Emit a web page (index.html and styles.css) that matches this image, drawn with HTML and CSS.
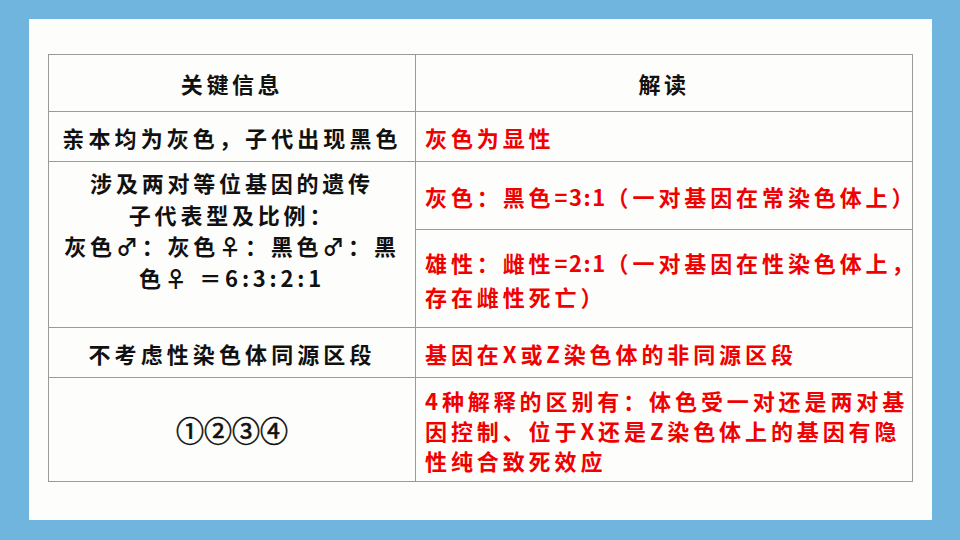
FILE: index.html
```html
<!DOCTYPE html>
<html lang="zh-CN">
<head>
<meta charset="utf-8">
<title>关键信息 解读</title>
<link rel="stylesheet" href="styles.css">
</head>
<body>
<div class="panel">
  <table class="info">
    <colgroup><col class="c-left"><col class="c-right"></colgroup>
    <tr class="r-head">
      <th>关键信息</th>
      <th>解读</th>
    </tr>
    <tr class="r-one">
      <td class="key">亲本均为灰色，子代出现黑色</td>
      <td class="read">灰色为显性</td>
    </tr>
    <tr class="r-twoa">
      <td class="key top" rowspan="2">涉及两对等位基因的遗传<br>子代表型及比例：<br>灰色♂：灰色♀：黑色♂：黑<br>色♀ ＝6:3:2:1</td>
      <td class="read">灰色：黑色<span class="lat">=3:1</span>（一对基因在常染色体上）</td>
    </tr>
    <tr class="r-twob">
      <td class="read tall">雄性：雌性<span class="lat">=2:1</span>（一对基因在性染色体上，<br>存在雌性死亡）</td>
    </tr>
    <tr class="r-three">
      <td class="key">不考虑性染色体同源区段</td>
      <td class="read">基因在X或Z染色体的非同源区段</td>
    </tr>
    <tr class="r-four">
      <td class="key nums">①②③④</td>
      <td class="read">4种解释的区别有：体色受一对还是两对基<br>因控制、位于X还是Z染色体上的基因有隐<br>性纯合致死效应</td>
    </tr>
  </table>
</div>
</body>
</html>
```
FILE: styles.css
```css
html, body {
  margin: 0;
  padding: 0;
}
body {
  width: 960px;
  height: 540px;
  background: #6fb5dd;
  overflow: hidden;
  font-family: "Noto Sans CJK SC", "Noto Sans", sans-serif;
}
.panel {
  box-sizing: border-box;
  margin: 19px 0 0 29px;
  width: 903px;
  height: 501px;
  background: #fdfdfb;
  padding: 35px 0 0 19px;
}
.info {
  border-collapse: collapse;
  width: 864px;
  table-layout: fixed;
  font-size: 22px;
  font-weight: 700;
  letter-spacing: 3.6px;
}
.c-left { width: 367px; }
.c-right { width: 497px; }
.info th, .info td {
  border: 1.5px solid #9a9a9a;
  padding: 0;
  white-space: nowrap;
  overflow: visible;
}
.info th {
  color: #111;
  font-weight: 700;
  text-align: center;
}
.r-head { height: 57px; }
.r-one { height: 50px; }
.r-twoa { height: 68px; }
.r-twob { height: 98px; }
.r-three { height: 50px; }
.r-four { height: 104px; }
.info .key {
  color: #111;
  text-align: center;
  vertical-align: middle;
  letter-spacing: 4.1px;
}
.info .key.top {
  vertical-align: top;
  line-height: 31.5px;
  padding-top: 5px;
  letter-spacing: 3.8px;
}
.info .key.nums {
  font-size: 28px;
  letter-spacing: 0;
  font-weight: 400;
  -webkit-text-stroke: 0.6px #111;
}
.info .read {
  color: #f00000;
  text-align: left;
  padding-left: 9px;
  vertical-align: middle;
  line-height: 30px;
  letter-spacing: 3.9px;
}
.info .read .lat {
  letter-spacing: 1.5px;
}
.info .read.tall {
  line-height: 34px;
}
```
